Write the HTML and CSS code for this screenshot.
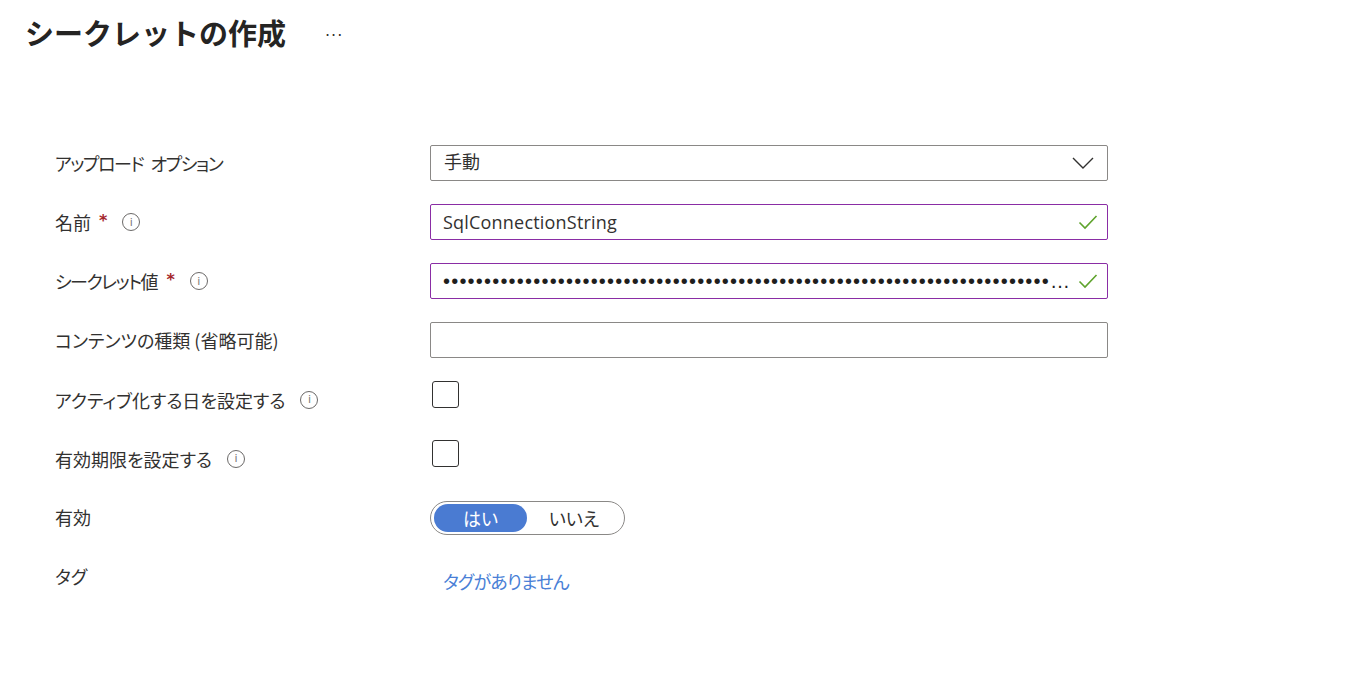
FILE: index.html
```html
<!DOCTYPE html>
<html lang="ja">
<head>
<meta charset="utf-8">
<title>シークレットの作成</title>
<link rel="stylesheet" href="styles.css">
</head>
<body>
<header class="page-header">
  <h1 class="title">シークレットの作成</h1>
  <span class="more">···</span>
</header>
<main class="form">
  <div class="row">
    <div class="label"><span class="kana">アップロード オプション</span></div>
    <div class="field">
      <div class="select">
        <span class="value">手動</span>
        <svg class="chevron" width="22" height="14" viewBox="0 0 22 14"><path d="M1 2 L11 12 L21 2" fill="none" stroke="#323130" stroke-width="1.4"/></svg>
      </div>
    </div>
  </div>
  <div class="row">
    <div class="label">名前<span class="req">*</span><span class="info">i</span></div>
    <div class="field">
      <div class="input valid">
        <span class="value">SqlConnectionString</span>
        <svg class="check" width="20" height="16" viewBox="0 0 20 16"><path d="M1.5 8.5 L7 14 L18.5 2" fill="none" stroke="#5ea32c" stroke-width="1.6"/></svg>
      </div>
    </div>
  </div>
  <div class="row">
    <div class="label"><span class="kana">シークレット</span>値<span class="req">*</span><span class="info">i</span></div>
    <div class="field">
      <div class="input valid">
        <span class="value dots">••••••••••••••••••••••••••••••••••••••••••••••••••••••••••••••••••••••••••••••••••••••••••••••••••••••••</span>
        <svg class="check" width="20" height="16" viewBox="0 0 20 16"><path d="M1.5 8.5 L7 14 L18.5 2" fill="none" stroke="#5ea32c" stroke-width="1.6"/></svg>
      </div>
    </div>
  </div>
  <div class="row">
    <div class="label">コンテンツの種類 (省略可能)</div>
    <div class="field">
      <div class="input"></div>
    </div>
  </div>
  <div class="row">
    <div class="label label-low">アクティブ化する日を設定する<span class="info">i</span></div>
    <div class="field field-top">
      <span class="checkbox"></span>
    </div>
  </div>
  <div class="row">
    <div class="label label-low">有効期限を設定する<span class="info">i</span></div>
    <div class="field field-top">
      <span class="checkbox"></span>
    </div>
  </div>
  <div class="row">
    <div class="label">有効</div>
    <div class="field">
      <div class="toggle">
        <span class="opt on">はい</span>
        <span class="opt">いいえ</span>
      </div>
    </div>
  </div>
  <div class="row">
    <div class="label">タグ</div>
    <div class="field">
      <a class="link" href="#">タグがありません</a>
    </div>
  </div>
</main>
</body>
</html>
```

FILE: styles.css
```css
html, body {
  margin: 0;
  padding: 0;
  background: #ffffff;
}
body {
  font-family: "Noto Sans CJK JP", "Noto Sans", sans-serif;
  color: #323130;
  font-feature-settings: "palt";
}
.page-header {
  display: flex;
  align-items: center;
  height: 64px;
  padding-left: 25px;
  padding-bottom: 4px;
}
.title {
  margin: 0;
  font-size: 29px;
  font-weight: 700;
  line-height: 34px;
  font-feature-settings: normal;
  color: #252423;
}
.more {
  margin-left: 39px;
  font-size: 16px;
  letter-spacing: 1px;
  color: #323130;
  font-family: "DejaVu Sans", sans-serif;
  position: relative;
  top: 3px;
}
.form {
  display: flex;
  flex-direction: column;
  gap: 23px;
  padding: 77px 0 0 55px;
}
.row {
  display: grid;
  grid-template-columns: 375px 678px;
  height: 36px;
}
.label {
  display: flex;
  align-items: center;
  font-size: 18px;
  line-height: 22px;
}
.kana {
  letter-spacing: -1.5px;
  word-spacing: 5px;
}
.label-low {
  padding-top: 1px;
}
.req {
  color: #a4262c;
  font-family: "DejaVu Sans", sans-serif;
  font-weight: 700;
  font-size: 16px;
  margin-left: 8px;
  position: relative;
  top: -1px;
}
.info {
  display: inline-flex;
  align-items: center;
  justify-content: center;
  box-sizing: border-box;
  width: 18px;
  height: 18px;
  border: 1.3px solid #6b6968;
  border-radius: 50%;
  margin-left: 15px;
  font-family: "DejaVu Sans", sans-serif;
  font-size: 11px;
  line-height: 1;
  color: #7a7876;
}
.field {
  display: flex;
  align-items: center;
}
.field-top {
  align-items: flex-start;
}
.select, .input {
  box-sizing: border-box;
  width: 678px;
  height: 36px;
  border: 1px solid #8a8886;
  border-radius: 2px;
  display: flex;
  align-items: center;
  padding: 0 12px;
  gap: 8px;
}
.input.valid {
  border-color: #8a2da5;
}
.value {
  flex: 1;
  min-width: 0;
  font-size: 18px;
  letter-spacing: 0.2px;
  white-space: nowrap;
  overflow: hidden;
  text-overflow: ellipsis;
  font-family: "Open Sans", "Noto Sans CJK JP", sans-serif;
  color: #323130;
}
.select .value {
  font-family: "Noto Sans CJK JP", sans-serif;
  padding-left: 1px;
  padding-bottom: 4px;
  letter-spacing: 0;
}
.dots {
  font-family: "Liberation Sans", sans-serif;
  font-size: 20px;
  letter-spacing: 1.2px;
  color: #1f1e1d;
}
.chevron {
  flex: none;
  margin-right: 1px;
}
.check {
  flex: none;
  margin-right: -3px;
}
.checkbox {
  display: block;
  box-sizing: border-box;
  width: 27px;
  height: 27px;
  margin-left: 2px;
  border: 1px solid #323130;
  border-radius: 3px;
}
.toggle {
  box-sizing: border-box;
  width: 195px;
  height: 34px;
  margin-top: 2px;
  border: 1px solid #8a8886;
  border-radius: 17px;
  padding: 2px 3px;
  display: flex;
  align-items: stretch;
}
.opt {
  flex: 1;
  display: flex;
  align-items: center;
  justify-content: center;
  font-size: 18px;
  border-radius: 14px;
  color: #323130;
}
.opt.on {
  flex: none;
  width: 93px;
  background: #4a7bd2;
  color: #ffffff;
}
.link {
  margin-left: 13px;
  margin-top: 10px;
  font-size: 18px;
  letter-spacing: -0.8px;
  color: #4a7fd6;
  text-decoration: none;
}
```
